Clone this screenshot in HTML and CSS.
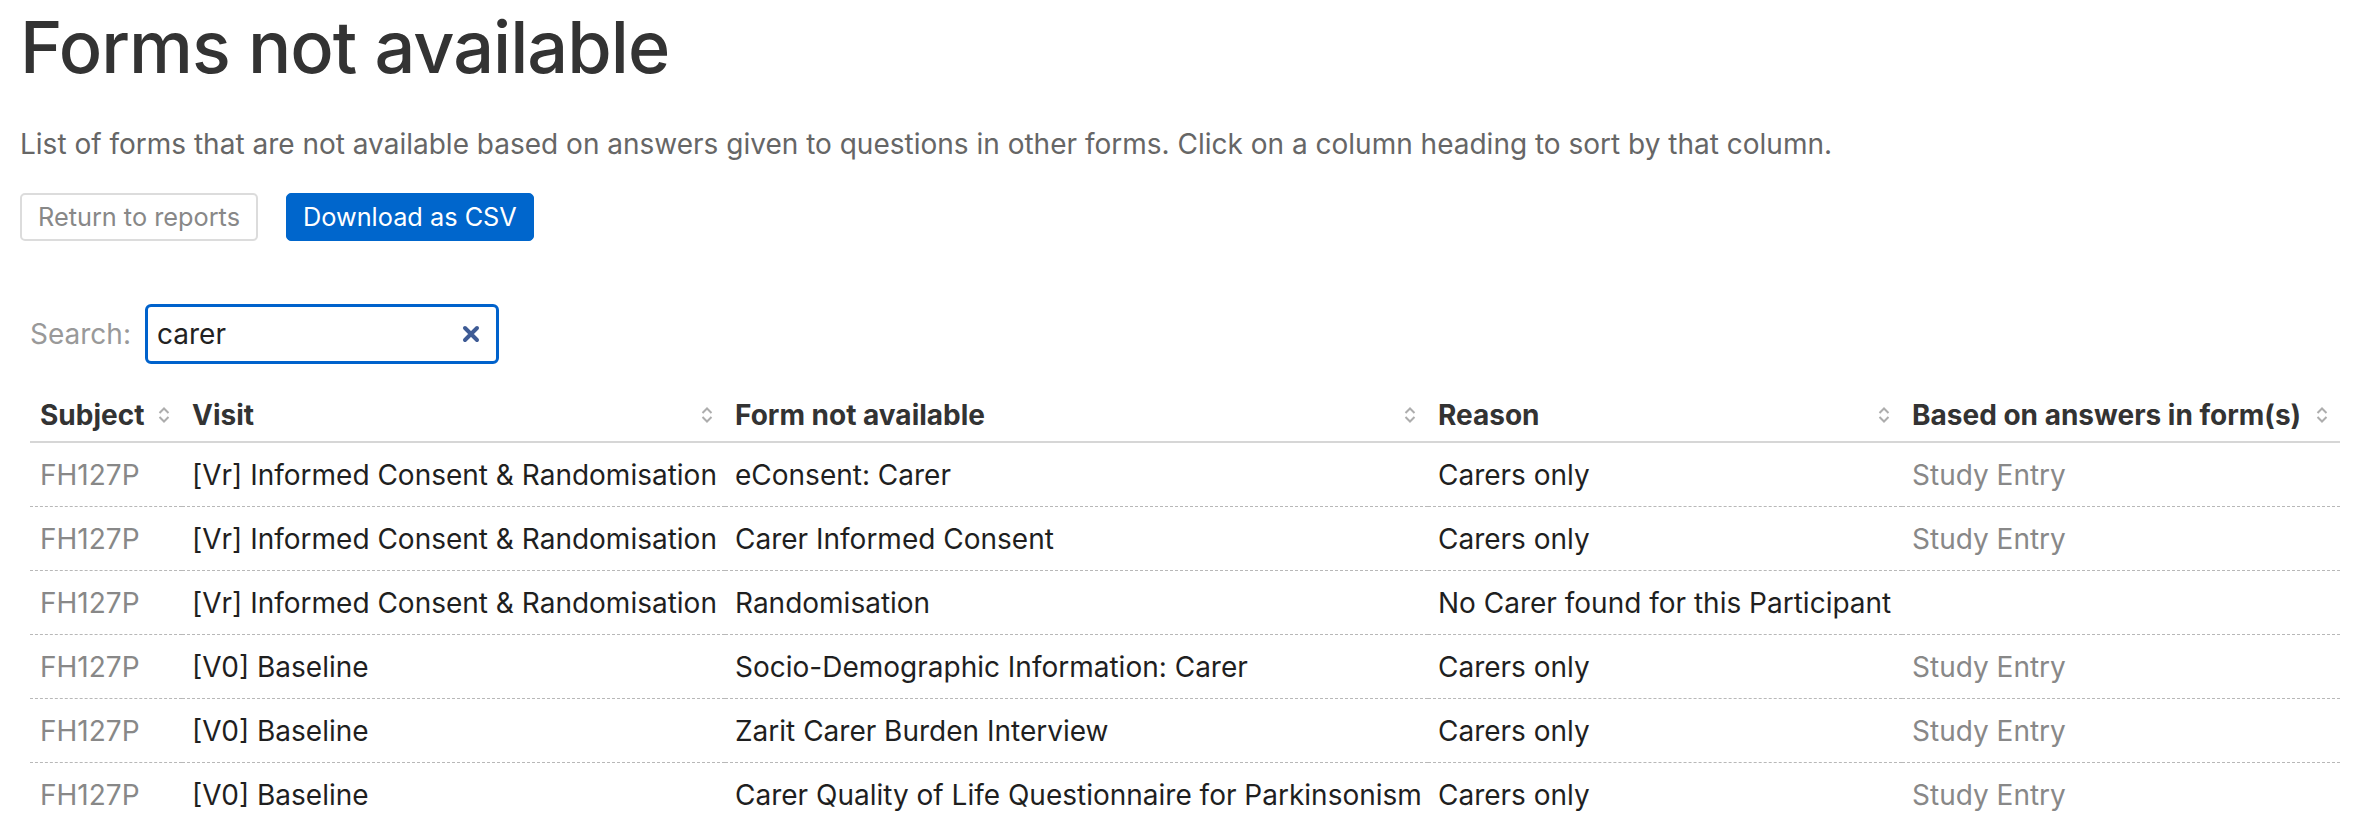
FILE: index.html
```html
<!DOCTYPE html>
<html lang="en">
<head>
<meta charset="utf-8">
<title>Forms not available</title>
<link rel="stylesheet" href="styles.css">
</head>
<body>
<div class="page">
  <h1 class="title">Forms not available</h1>
  <p class="intro">List of forms that are not available based on answers given to questions in other forms. Click on a column heading to sort by that column.</p>
  <div class="actions">
    <a class="btn btn-light" href="#">Return to reports</a>
    <a class="btn btn-primary" href="#">Download as CSV</a>
  </div>

  <div class="report">
    <div class="search">
      <label class="search-label">Search:</label>
      <div class="search-box">
        <span class="search-value">carer</span>
        <svg class="clear" width="20" height="20" viewBox="0 0 20 20" aria-hidden="true"><path d="M4 4 L16 16 M16 4 L4 16" fill="none" stroke="#3e5b95" stroke-width="4" stroke-linecap="round"/></svg>
      </div>
    </div>

    <table class="grid">
      <colgroup>
        <col class="c-subject">
        <col class="c-visit">
        <col class="c-form">
        <col class="c-reason">
        <col class="c-based">
      </colgroup>
      <thead>
        <tr>
          <th><div class="th-in"><span>Subject</span><svg class="sort" width="14" height="20" viewBox="0 0 14 20"><path d="M2.5 8 L7 3.5 L11.5 8 M2.5 12 L7 16.5 L11.5 12" fill="none" stroke="#adadad" stroke-width="2"/></svg></div></th>
          <th><div class="th-in"><span>Visit</span><svg class="sort" width="14" height="20" viewBox="0 0 14 20"><path d="M2.5 8 L7 3.5 L11.5 8 M2.5 12 L7 16.5 L11.5 12" fill="none" stroke="#adadad" stroke-width="2"/></svg></div></th>
          <th><div class="th-in"><span>Form not available</span><svg class="sort" width="14" height="20" viewBox="0 0 14 20"><path d="M2.5 8 L7 3.5 L11.5 8 M2.5 12 L7 16.5 L11.5 12" fill="none" stroke="#adadad" stroke-width="2"/></svg></div></th>
          <th><div class="th-in"><span>Reason</span><svg class="sort" width="14" height="20" viewBox="0 0 14 20"><path d="M2.5 8 L7 3.5 L11.5 8 M2.5 12 L7 16.5 L11.5 12" fill="none" stroke="#adadad" stroke-width="2"/></svg></div></th>
          <th><div class="th-in"><span>Based on answers in form(s)</span><svg class="sort" width="14" height="20" viewBox="0 0 14 20"><path d="M2.5 8 L7 3.5 L11.5 8 M2.5 12 L7 16.5 L11.5 12" fill="none" stroke="#adadad" stroke-width="2"/></svg></div></th>
        </tr>
      </thead>
      <tbody>
        <tr><td class="muted">FH127P</td><td>[Vr] Informed Consent &amp; Randomisation</td><td>eConsent: Carer</td><td>Carers only</td><td class="muted">Study Entry</td></tr>
        <tr><td class="muted">FH127P</td><td>[Vr] Informed Consent &amp; Randomisation</td><td>Carer Informed Consent</td><td>Carers only</td><td class="muted">Study Entry</td></tr>
        <tr><td class="muted">FH127P</td><td>[Vr] Informed Consent &amp; Randomisation</td><td>Randomisation</td><td>No Carer found for this Participant</td><td class="muted"></td></tr>
        <tr><td class="muted">FH127P</td><td>[V0] Baseline</td><td>Socio-Demographic Information: Carer</td><td>Carers only</td><td class="muted">Study Entry</td></tr>
        <tr><td class="muted">FH127P</td><td>[V0] Baseline</td><td>Zarit Carer Burden Interview</td><td>Carers only</td><td class="muted">Study Entry</td></tr>
        <tr><td class="muted">FH127P</td><td>[V0] Baseline</td><td>Carer Quality of Life Questionnaire for Parkinsonism</td><td>Carers only</td><td class="muted">Study Entry</td></tr>
      </tbody>
    </table>
  </div>
</div>
</body>
</html>
```
FILE: styles.css
```css
html, body {
  margin: 0;
  padding: 0;
  background: #ffffff;
}

body {
  font-family: Inter, "Noto Sans", "Liberation Sans", sans-serif;
  color: #222222;
  font-size: 28px;
  line-height: 36px;
}

.page {
  padding: 0 20px;
}

.title {
  margin: 4px 0 0;
  font-size: 72px;
  line-height: 86px;
  font-weight: 500;
  color: #333333;
  letter-spacing: -1px;
}

.intro {
  margin: 34px 0 0;
  font-size: 28px;
  line-height: 40px;
  color: #666666;
}

.actions {
  display: flex;
  gap: 28px;
  margin-top: 29px;
}

.btn {
  display: inline-block;
  padding: 5px 16px;
  border: 1px solid transparent;
  border-radius: 5px;
  font-size: 25.3px;
  line-height: 36px;
  text-decoration: none;
}

.btn-light {
  border: 2px solid #dcdcdc;
  padding: 4px 16px;
  color: #888888;
  background: #ffffff;
}

.btn-primary {
  background: #0066cc;
  border-color: #0066cc;
  color: #ffffff;
}

.report {
  margin-top: 63px;
  padding-left: 10px;
}

.search {
  display: flex;
  align-items: center;
  gap: 14px;
  height: 60px;
}

.search-label {
  color: #999999;
}

.search-box {
  box-sizing: border-box;
  width: 354px;
  height: 60px;
  border: 3px solid #0062cc;
  border-radius: 6px;
  display: flex;
  align-items: center;
  justify-content: space-between;
  padding: 0 15px 0 9px;
}

.search-value {
  color: #222222;
}

.clear {
  display: block;
}

.grid {
  margin-top: 25px;
  width: 100%;
  border-collapse: collapse;
  table-layout: fixed;
}

.c-subject { width: 152px; }
.c-visit { width: 543px; }
.c-form { width: 703px; }
.c-reason { width: 474px; }
.c-based { width: 438px; }

.grid th {
  padding: 8px 11px 8px 10px;
  text-align: left;
  font-weight: 700;
  color: #333333;
  border-bottom: 2px solid #d6d6d6;
  white-space: nowrap;
}

.th-in {
  display: flex;
  align-items: center;
  justify-content: space-between;
  gap: 6px;
}

.sort {
  display: block;
  flex: none;
}

.grid td {
  padding: 14px 10px 13px;
  border-bottom: 1px dashed #b8b8b8;
  white-space: nowrap;
  color: #1f1f1f;
}

.grid td.muted {
  color: #888888;
}
```
